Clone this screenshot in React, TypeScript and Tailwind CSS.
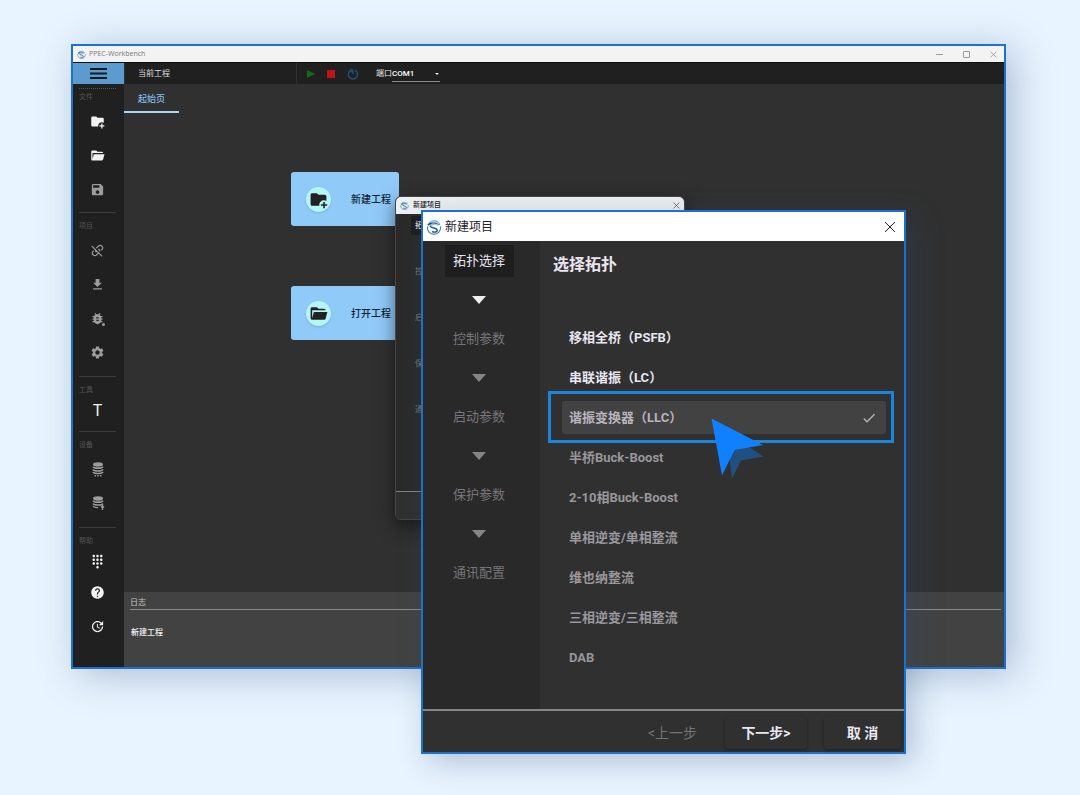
import { Fragment, ReactNode, useState } from "react"
import clsx from "clsx"
import { MdBugReport, MdCheck, MdDialpad, MdFileDownload, MdHelp, MdSave, MdSettings, MdUpdate } from "react-icons/md"

const STEPS = ["拓扑选择", "控制参数", "启动参数", "保护参数", "通讯配置"]

const TOPOLOGIES = [
    { id: "psfb", name: "移相全桥（PSFB）", ready: true },
    { id: "lc", name: "串联谐振（LC）", ready: true },
    { id: "llc", name: "谐振变换器（LLC）", ready: true },
    { id: "buck", name: "半桥Buck-Boost", ready: false },
    { id: "buck-multi", name: "2-10相Buck-Boost", ready: false },
    { id: "single", name: "单相逆变/单相整流", ready: false },
    { id: "vienna", name: "维也纳整流", ready: false },
    { id: "three", name: "三相逆变/三相整流", ready: false },
    { id: "dab", name: "DAB", ready: false },
]

function Glyph({ d, className }: { d: string; className?: string }) {
    return (
        <svg viewBox="0 0 24 24" fill="currentColor" className={clsx("shrink-0", className)} aria-hidden="true">
            <path d={d} />
        </svg>
    )
}

const FOLDER_PLUS =
    "M13 19c0 .34.04.67.09 1H4a2 2 0 0 1-2-2V6c0-1.11.89-2 2-2h6l2 2h8a2 2 0 0 1 2 2v5.81c-.88-.51-1.9-.81-3-.81-3.31 0-6 2.69-6 6m7-1v-3h-2v3h-3v2h3v3h2v-3h3v-2z"
const FOLDER_OPEN =
    "M19 20H4c-1.11 0-2-.9-2-2V6c0-1.11.89-2 2-2h6l2 2h7a2 2 0 0 1 2 2H4v10l2.14-8h17.07l-2.28 8.5c-.23.87-1.01 1.5-1.93 1.5z"
const LINK_OFF =
    "M2 5.27L3.28 4 20 20.72 18.73 22l-4.83-4.83-2.61 2.61c-1.95 1.95-5.12 1.95-7.07 0s-1.95-5.12 0-7.07l1.49-1.49c-.01.82.12 1.64.4 2.43l-.47.47c-1.18 1.17-1.18 3.07 0 4.24 1.17 1.18 3.07 1.18 4.24 0l2.62-2.6-1.62-1.61c-.01.24-.11.49-.29.68-.39.39-1.03.39-1.42 0A4.97 4.97 0 0 1 7.72 11L2 5.27M12.71 4.22c1.95-1.95 5.12-1.95 7.07 0s1.95 5.12 0 7.07l-1.49 1.49c.01-.82-.12-1.64-.4-2.42l.47-.48c1.18-1.17 1.18-3.07 0-4.24-1.17-1.18-3.07-1.18-4.24 0l-3.33 3.33-1.41-1.42 3.33-3.33M13.41 9.17c.39-.39 1.03-.39 1.42 0a5.02 5.02 0 0 1 1.23 5.06l-1.78-1.77a2.97 2.97 0 0 0-.87-1.87c-.41-.39-.41-1.03 0-1.42z"

function Logo({ className }: { className?: string }) {
    return (
        <svg viewBox="0 0 24 24" fill="none" className={clsx("shrink-0", className)} aria-hidden="true">
            <path d="M3 8A10 10 0 0 1 21.500 8.500L18 10 13.500 8.500 8 10z" fill="#5aa3d6" />
            <path d="M21.800 11A10 10 0 1 1 2.200 11" stroke="#3f86bd" strokeWidth="1.800" />
            <path d="M2.500 9.500C7 5 12 5.500 17 8M6 10c0 4 11 2.500 11 7 0 2.500-4 3.500-8 2" stroke="#1f4e79" strokeWidth="2" />
            <path d="M8 8c3-1.500 7-.5 13 3M7 4.500c4-1 8 0 12 2" stroke="#fff" strokeWidth="1.100" />
        </svg>
    )
}

function Database({ upload }: { upload?: boolean }) {
    return (
        <svg viewBox="0 0 14 16" fill="none" stroke="currentColor" strokeWidth="1.600" className="h-4 w-[14px]" aria-hidden="true">
            <ellipse cx="7" cy="3.500" rx="5" ry="2.200" fill="currentColor" stroke="none" />
            <path d="M2 5.800c1 1.800 9 1.800 10 0M2 8.600c1 1.800 9 1.800 10 0" />
            {upload ? (
                <path d="M2 11.200c1 1.200 3 1.600 5 1.500M11.500 15v-4M10 12.200l1.500-1.500 1.500 1.500" strokeWidth="1.300" />
            ) : (
                <path d="M2 11.200c1 1.800 9 1.800 10 0M3.500 14.700h1.400M6.300 14.700h1.400M9.100 14.700h1.400" />
            )}
        </svg>
    )
}

function Close({ className }: { className?: string }) {
    return (
        <svg viewBox="0 0 12 12" stroke="currentColor" className={className} aria-hidden="true">
            <path d="M1 1l10 10M11 1L1 11" />
        </svg>
    )
}

function ToolButton({ label, compact, bright, children }: { label: string; compact?: boolean; bright?: boolean; children: ReactNode }) {
    return (
        <button
            type="button"
            aria-label={label}
            className={clsx(
                "flex items-center justify-center",
                compact ? "h-[27px]" : "h-[34px]",
                bright ? "text-[#f2f2f2]" : "text-[#9c9c9c]"
            )}
        >
            {children}
        </button>
    )
}

function ToolGroup({ title, first, children }: { title: string; first?: boolean; children: ReactNode }) {
    return (
        <section
            className={clsx(
                "mr-2 ml-[6px] flex flex-col border-t",
                first ? "mt-1 border-dotted border-[#555555] pb-[6px]" : "border-[#3d3d3d] pt-[5px] pb-[7px]"
            )}
        >
            <h2 className="text-[7px] leading-[17px] text-[#555555]">{title}</h2>
            <div className="-mt-[2px] flex flex-col">{children}</div>
        </section>
    )
}

function Sidebar() {
    return (
        <nav className="w-[51px] shrink-0 bg-[#202020] pb-[17px]">
            <ToolGroup title="文件" first>
                <ToolButton label="新建" bright><Glyph d={FOLDER_PLUS} className="size-[15px]" /></ToolButton>
                <ToolButton label="打开" bright><Glyph d={FOLDER_OPEN} className="size-[15px]" /></ToolButton>
                <ToolButton label="保存"><MdSave className="size-[15px]" /></ToolButton>
            </ToolGroup>
            <ToolGroup title="项目">
                <ToolButton label="断开"><Glyph d={LINK_OFF} className="size-[15px]" /></ToolButton>
                <ToolButton label="下载"><MdFileDownload className="size-[15px]" /></ToolButton>
                <ToolButton label="调试">
                    <span className="flex items-end">
                        <MdBugReport className="size-[15px]" />
                        <i className="-ml-[3px] size-[3px] rounded-full bg-current" />
                    </span>
                </ToolButton>
                <ToolButton label="设置"><MdSettings className="size-[15px]" /></ToolButton>
            </ToolGroup>
            <ToolGroup title="工具">
                <ToolButton label="文本" compact bright><span className="text-base">T</span></ToolButton>
            </ToolGroup>
            <ToolGroup title="设备">
                <ToolButton label="读取"><Database /></ToolButton>
                <ToolButton label="写入"><Database upload /></ToolButton>
            </ToolGroup>
            <ToolGroup title="帮助">
                <ToolButton label="面板" compact bright><MdDialpad className="size-[15px]" /></ToolButton>
                <ToolButton label="帮助" bright><MdHelp className="size-[15px]" /></ToolButton>
                <ToolButton label="更新" bright><MdUpdate className="size-[15px]" /></ToolButton>
            </ToolGroup>
        </nav>
    )
}

function Toolbar() {
    return (
        <div className="flex h-[22px] items-stretch border-t border-[#101010] bg-[#202020]">
            <button type="button" aria-label="菜单" className="flex w-[51px] shrink-0 items-center justify-center bg-[#5b9bd0] text-[#101820]">
                <svg viewBox="0 0 17 13" className="h-[13px] w-[17px]" aria-hidden="true">
                    <path d="M0 2h17M0 6.500h17M0 11h17" stroke="currentColor" strokeWidth="2" />
                </svg>
            </button>
            <div className="flex w-[172px] items-center border-l border-[#303030] pl-[13px] text-[8px] text-[#dddddd]">当前工程</div>
            <div className="flex items-center gap-3 border-l border-[#303030] pl-[9px]">
                <button type="button" aria-label="运行" className="text-[#136b1a]">
                    <svg viewBox="0 0 9 10" className="h-[10px] w-[9px]" fill="currentColor"><path d="M1 1l8 4-8 4z" /></svg>
                </button>
                <button type="button" aria-label="停止" className="size-2 bg-[#c0141a]" />
                <button type="button" aria-label="复位" className="text-[#1f4f7e]">
                    <svg viewBox="0 0 12 12" className="size-3" fill="none" stroke="currentColor" strokeWidth="1.500">
                        <path d="M4 2.300a4.600 4.600 0 1 0 4 0M6 3v3M3.500.800L5.500 2 4 4" />
                    </svg>
                </button>
            </div>
            <div className="ml-[7px] flex items-center pl-[10px] text-[8px] text-[#e6e6e6]">
                <label htmlFor="port">端口</label>
                <div className="relative h-[17px] w-12 border-b border-[#8a8a8a]">
                    <select id="port" className="h-[17px] w-full appearance-none bg-transparent text-[8px] leading-[17px] font-medium text-white outline-none">
                        <option>COM1</option>
                    </select>
                    <svg viewBox="0 0 4 2" className="pointer-events-none absolute top-2 right-px h-[2px] w-1" fill="currentColor">
                        <path d="M0 0h4L2 2z" />
                    </svg>
                </div>
            </div>
        </div>
    )
}

function ProjectCard({ label, icon }: { label: string; icon: string }) {
    return (
        <button
            type="button"
            className="flex h-[54px] w-[108px] items-center justify-between rounded-[3px] bg-[#90caf9] pr-2 pl-[15px] text-[10px] font-medium text-[#122433]"
        >
            <span className="flex size-[25px] items-center justify-center rounded-full bg-[#b5f5f8] text-[#222222] shadow">
                <Glyph d={icon} className="size-[19px]" />
            </span>
            {label}
        </button>
    )
}

function SmallDialog() {
    return (
        <div className="absolute top-[152px] left-[324px] w-[290px] overflow-hidden rounded-md border border-[#454545] bg-[#2a2a2a] shadow-[0_6px_18px_rgba(0,0,0,0.5)]">
            <header className="flex h-[17px] items-center bg-[#edf0f2] px-1 text-[#222222]">
                <Logo className="size-[9px]" />
                <span className="ml-1 flex-1 text-[7px] font-medium">新建项目</span>
                <Close className="size-[7px]" />
            </header>
            <ul className="h-[277px] px-[15px] pt-[2px] text-[8px] text-[#777777]">
                {STEPS.map((step, i) => (
                    <li key={step} className="h-[46px]">
                        <span className={clsx("block h-[19px] w-10 px-1 leading-[19px]", i === 0 && "bg-[#1e1e1e] text-white")}>
                            {step}
                        </span>
                    </li>
                ))}
            </ul>
            <div className="h-7 border-t border-[#808080] bg-[#303030]" />
        </div>
    )
}

function StepList() {
    return (
        <ol className="flex w-[117px] shrink-0 flex-col items-center bg-[#292929] pt-1 pr-[5px] text-[13px] text-[#77757a]">
            {STEPS.map((step, i) => (
                <Fragment key={step}>
                    {i > 0 && (
                        <li aria-hidden="true" className={clsx("flex h-[46px] items-center", i === 1 ? "text-[#eeeeee]" : "text-[#858585]")}>
                            <svg viewBox="0 0 14 8" className="h-2 w-[14px]" fill="currentColor"><path d="M0 0h14L7 8z" /></svg>
                        </li>
                    )}
                    <li className={clsx("h-8 w-[69px] text-center leading-8", i === 0 && "bg-[#1e1e1e] text-[#e6e4ee]")}>{step}</li>
                </Fragment>
            ))}
        </ol>
    )
}

function Pointer() {
    return (
        <svg viewBox="0 0 56 62" className="pointer-events-none absolute top-[206px] left-[288px] z-10 h-[62px] w-14" aria-hidden="true">
            <path d="M15 14l37.500 24.500-22.500 4-9 18z" fill="#1d5691" opacity=".85" />
            <path d="M.500 0.500l51.500 26.500-28.500 5-12.500 25.500z" fill="#1180ff" />
        </svg>
    )
}

function NewProjectDialog() {
    const [selected, setSelected] = useState("llc")

    return (
        <div
            role="dialog"
            aria-labelledby="dialog-title"
            className="absolute top-[166px] left-[350px] flex w-[485px] flex-col border-2 border-[#1b70d0] bg-[#303030] shadow-[8px_8px_28px_rgba(50,80,120,0.3)]"
        >
            <header className="flex h-[29px] items-center bg-white px-[3px] text-[#24212b]">
                <Logo className="size-4" />
                <h2 id="dialog-title" className="ml-[3px] flex-1 text-xs">新建项目</h2>
                <button type="button" aria-label="关闭" className="mr-[5px]"><Close className="size-3" /></button>
            </header>
            <div className="flex">
                <StepList />
                <div role="radiogroup" aria-labelledby="topology-title" className="flex-1 pr-[10px] pb-8 pl-2">
                    <h3 id="topology-title" className="px-[5px] pt-3 text-base leading-6 font-bold text-[#e9e6f0]">选择拓扑</h3>
                    <div className="mt-10">
                        {TOPOLOGIES.map(({ id, name, ready }) => {
                            const active = id === selected
                            return (
                                <label key={id} className="relative flex h-10 items-center px-[14px]">
                                    <input
                                        type="radio"
                                        name="topology"
                                        value={id}
                                        checked={active}
                                        onChange={() => setSelected(id)}
                                        className="sr-only"
                                    />
                                    <span
                                        className={clsx(
                                            "flex h-[33px] flex-1 items-center justify-between rounded-[3px] px-[7px] pt-[2px] text-[13px] font-bold",
                                            active ? "-mr-[6px] bg-[#424242] text-[#b8b3bd]" : ready ? "text-[#e9e6f0]" : "text-[#99969c]"
                                        )}
                                    >
                                        {name}
                                        {active && <MdCheck className="mr-[2px] size-4" />}
                                    </span>
                                    {active && <span className="absolute -inset-y-[6px] inset-x-0 border-3 border-[#1a85dc]" />}
                                </label>
                            )
                        })}
                    </div>
                </div>
            </div>
            <footer className="flex h-[43px] items-center justify-end border-t-2 border-[#868686] pt-[3px] text-sm font-bold text-[#e9e6f0]">
                <button type="button" disabled className="mr-7 font-normal text-[#747474]">&lt;上一步</button>
                <button type="button" className="mr-[17px] h-8 w-[82px] rounded-sm shadow-[0_1px_3px_rgba(0,0,0,0.35)]">下一步&gt;</button>
                <button type="button" className="mr-[3px] h-8 w-[77px] rounded-sm shadow-[0_1px_3px_rgba(0,0,0,0.35)]">取 消</button>
            </footer>
            <Pointer />
        </div>
    )
}

export default function App() {
    return (
        <div className="min-h-screen bg-[#e8f4ff] pt-11 pr-[74px] pb-[125px] pl-[71px] font-['Roboto','Noto_Sans_CJK_SC',sans-serif]">
            <div className="relative">
                <main className="border-2 border-[#1b70d0] bg-[#303030] shadow-[8px_6px_36px_rgba(60,90,130,0.35)]">
                    <header className="flex h-4 items-center gap-[3px] bg-[#f3f3f3] px-1 text-[#777777]">
                        <Logo className="size-[9px]" />
                        <h1 className="flex-1 font-['Open_Sans',sans-serif] text-[7px]">PPEC-Workbench</h1>
                        <div className="flex items-center gap-5 pr-[3px]">
                            <button type="button" aria-label="最小化" className="h-px w-[7px] bg-[#999999]" />
                            <button type="button" aria-label="最大化" className="size-[7px] rounded-[1px] border border-[#999999]" />
                            <button type="button" aria-label="关闭窗口"><Close className="size-[7px]" /></button>
                        </div>
                    </header>
                    <Toolbar />
                    <div className="flex">
                        <Sidebar />
                        <div className="flex min-w-0 flex-1 flex-col">
                            <div className="flex">
                                <button type="button" className="h-[29px] border-b-2 border-[#a9d4f5] px-[14px] pt-1 text-[9px] font-medium text-[#7fbdec]">
                                    起始页
                                </button>
                            </div>
                            <div className="flex flex-1 flex-col gap-[60px] pt-[59px] pl-[167px]">
                                <ProjectCard label="新建工程" icon={FOLDER_PLUS} />
                                <ProjectCard label="打开工程" icon={FOLDER_OPEN} />
                            </div>
                            <section className="h-[75px] bg-[#424242] pr-[3px] pl-[6px] text-[8px]">
                                <h2 className="border-b border-[#8a8a8a] pt-[5px] leading-3 text-[#c4c4c4]">日志</h2>
                                <p className="px-px pt-[17px] leading-3 font-medium text-[#f0f0f0]">新建工程</p>
                            </section>
                        </div>
                    </div>
                </main>
                <SmallDialog />
                <NewProjectDialog />
            </div>
        </div>
    )
}
